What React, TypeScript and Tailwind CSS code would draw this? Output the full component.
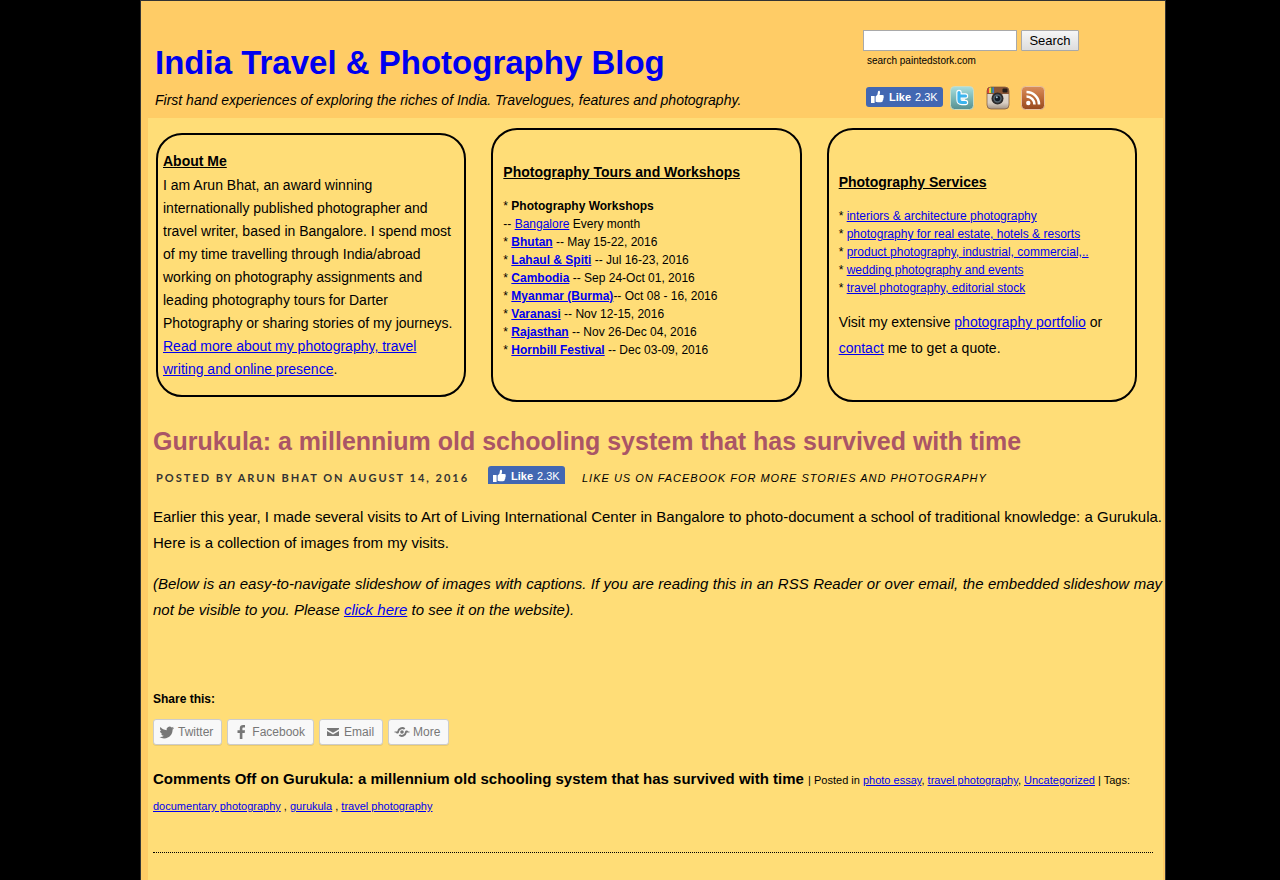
import type { ReactNode } from "react";

type LinkProps = { children: ReactNode; bold?: boolean };

function A({ children, bold }: LinkProps) {
  return (
    <a href="#" className={bold ? "font-bold text-[#0000ee] underline" : "text-[#0000ee] underline"}>
      {children}
    </a>
  );
}

function LikeButton() {
  return (
    <button
      type="button"
      className="flex h-5 w-[77px] shrink-0 items-center gap-[5px] rounded-[3px] bg-[#4267b2] pl-[5px] text-[11px] leading-5 text-white"
    >
      <svg width="13" height="14" viewBox="0 0 13 14" fill="currentColor" aria-hidden="true">
        <rect x="0" y="6" width="3.6" height="7" />
        <path d="M4.600 6.600 6.400 4.700 7 1.600C7.100.8 8.400.6 8.800 1.300 9.300 2.300 9 3.700 8.500 5H11.500C12.800 5 13 6 12.600 6.700 12.900 7.400 12.700 8 12.300 8.500 12.500 9.300 12.200 9.900 11.800 10.300 11.900 11.400 11.200 12.300 10 12.300H6.800C5.900 12.300 5.300 12 4.600 11.800Z" />
      </svg>
      <span>
        <b>Like</b> <span className="ml-px">2.3K</span>
      </span>
    </button>
  );
}

function TwitterBadge() {
  return (
    <svg width="24" height="24" viewBox="0 0 24 24" aria-hidden="true">
      <defs>
        <linearGradient id="tw" x1="0" y1="0" x2="0" y2="1">
          <stop offset="0" stopColor="#aadfdf" />
          <stop offset="0.5" stopColor="#7cb8b8" />
          <stop offset="1" stopColor="#568f90" />
        </linearGradient>
      </defs>
      <rect x="0.500" y="0.500" width="23" height="23" rx="4" fill="url(#tw)" stroke="#cfdcc0" />
      <path d="M9 6.500V13.500Q9 16.500 12 16.500H15.500M9 10H15.500" fill="none" stroke="#fff" strokeWidth="5.400" strokeLinecap="round" strokeLinejoin="round" />
      <path d="M9 6.500V13.500Q9 16.500 12 16.500H15.500M9 10H15.500" fill="none" stroke="#3bb4ee" strokeWidth="3.200" strokeLinecap="round" strokeLinejoin="round" />
      <path d="M11.800 13.200H15" stroke="#fff" strokeWidth="1.200" />
    </svg>
  );
}

function InstagramBadge() {
  return (
    <svg width="24" height="24" viewBox="0 0 24 24" aria-hidden="true">
      <defs>
        <clipPath id="ig">
          <rect x="1" y="1" width="22" height="22" rx="4" />
        </clipPath>
        <linearGradient id="ig-body" x1="0" y1="0" x2="0" y2="1">
          <stop offset="0" stopColor="#e6ddd2" />
          <stop offset="0.7" stopColor="#d9cfc4" />
          <stop offset="1" stopColor="#9a8a7c" />
        </linearGradient>
      </defs>
      <g clipPath="url(#ig)">
        <rect width="24" height="24" fill="url(#ig-body)" />
        <rect width="24" height="8" fill="#8a5636" />
        <rect x="1" width="2" height="7" fill="#e8413a" />
        <rect x="3" width="2" height="7" fill="#f4cc36" />
        <rect x="5" width="1.500" height="7" fill="#3f9f54" />
        <rect x="6.500" width="1.500" height="7" fill="#3c78d0" />
        <rect x="16.500" y="2.500" width="5" height="4" rx="1" fill="#241c19" />
      </g>
      <rect x="1" y="1" width="22" height="22" rx="4" fill="none" stroke="#7a5238" strokeOpacity="0.700" />
      <circle cx="11.500" cy="12.500" r="6" fill="#2c2a2b" />
      <circle cx="11.500" cy="12.500" r="4.200" fill="#56646e" />
      <circle cx="11.500" cy="12.500" r="2.800" fill="#141d27" />
      <circle cx="10.800" cy="11.300" r="1" fill="#a9c4d2" />
    </svg>
  );
}

function RssBadge() {
  return (
    <svg width="24" height="24" viewBox="0 0 24 24" aria-hidden="true">
      <defs>
        <linearGradient id="rss" x1="0" y1="0" x2="0" y2="1">
          <stop offset="0" stopColor="#d98d5c" />
          <stop offset="0.5" stopColor="#bd6a38" />
          <stop offset="1" stopColor="#95481f" />
        </linearGradient>
      </defs>
      <rect x="0.500" y="0.500" width="23" height="23" rx="4" fill="url(#rss)" stroke="#e8c2a0" />
      <circle cx="7.300" cy="17" r="2.200" fill="#fff" />
      <path d="M5.500 10.500A8 8 0 0 1 13.500 18.500M5.500 6A12.500 12.500 0 0 1 18 18.500" fill="none" stroke="#fff" strokeWidth="2.600" />
    </svg>
  );
}

const shareIcons: Record<string, ReactNode> = {
  Twitter: (
    <path d="M15 3.900c-.5.200-1.100.4-1.700.5.600-.4 1.100-.9 1.300-1.600-.6.300-1.200.6-1.900.7A3 3 0 0 0 7.600 6.200C5.100 6.100 2.900 4.900 1.400 3.100c-.8 1.400-.3 3.100.9 4-.5 0-.9-.2-1.300-.4 0 1.400 1 2.700 2.400 3-.4.1-.9.1-1.300 0 .4 1.200 1.500 2.100 2.800 2.100A6 6 0 0 1 .5 13c1.300.9 2.900 1.400 4.600 1.400 5.600 0 8.700-4.700 8.500-8.900.6-.4 1.100-1 1.400-1.600z" />
  ),
  Facebook: <path d="M6.800 15V9H4.500V6.300h2.300V4.300C6.800 2.100 8.100 1 10.100 1c.9 0 1.500.1 1.900.1v2.300h-1.300c-1.100 0-1.300.5-1.300 1.300v1.600h2.600L11.700 9H9.400v6z" />,
  Email: <path d="M2 4h12v1.200L8 8.700 2 5.200zm0 2.900 6 3.500 6-3.500V12H2z" />,
  More: (
    <path d="M8 6.200a1.800 1.800 0 1 0 0 3.600 1.800 1.800 0 0 0 0-3.600M0.500 7.500h2.700A5 5 0 0 1 11.300 4.200L10 5.700A3.200 3.200 0 0 0 5 8c0 .8-.6 1.500-1.500 1.500H2.700L1.800 8.600H.5zM15.500 8.500h-2.700A5 5 0 0 1 4.700 11.800L6 10.300A3.200 3.200 0 0 0 11 8c0-.8.600-1.500 1.500-1.500h.8l.9.9h1.300z" />
  ),
};

const shareLabels = ["Twitter", "Facebook", "Email", "More"];

const tours = [
  ["Bhutan", " -- May 15-22, 2016"],
  ["Lahaul & Spiti", " -- Jul 16-23, 2016"],
  ["Cambodia", " -- Sep 24-Oct 01, 2016"],
  ["Myanmar (Burma)", "-- Oct 08 - 16, 2016"],
  ["Varanasi", " -- Nov 12-15, 2016"],
  ["Rajasthan", " -- Nov 26-Dec 04, 2016"],
  ["Hornbill Festival", " -- Dec 03-09, 2016"],
];

const services = [
  "interiors & architecture photography",
  "photography for real estate, hotels & resorts",
  "product photography, industrial, commercial,..",
  "wedding photography and events",
  "travel photography, editorial stock",
];

export default function App() {
  return (
    <div className="min-h-screen bg-black pl-[26px] font-['Liberation_Sans',Arial,sans-serif] text-black">
      <div className="mx-auto min-h-screen max-w-[1026px] border border-b-0 border-[#333333] bg-[#ffcc66]">
        <header className="flex items-start justify-between pb-2 pl-[14px]">
          <div className="pt-[42px]">
            <h1 className="text-[33px] leading-10 font-bold">
              <a href="#" className="text-[#0000ee]">India Travel &amp; Photography Blog</a>
            </h1>
            <p className="mt-[7px] text-[14px] leading-5 italic">
              First hand experiences of exploring the riches of India. Travelogues, features and photography.
            </p>
          </div>
          <div className="w-[302px] shrink-0 pt-[29px]">
            <form className="flex gap-1" onSubmit={(e) => e.preventDefault()}>
              <input
                id="site-search"
                type="text"
                className="h-[21px] w-[154px] border border-[#a9a9a9] bg-white px-1 text-[13px]"
              />
              <button
                type="submit"
                className="h-[21px] w-[58px] rounded-[1px] border border-[#a9a9a9] bg-linear-to-b from-[#f6f6f6] to-[#dddddd] text-[13px] leading-[19px]"
              >
                Search
              </button>
            </form>
            <label htmlFor="site-search" className="ml-1 block text-[10px] leading-5">
              search paintedstork.com
            </label>
            <div className="mt-[15px] ml-[3px] flex items-start">
              <div className="pt-px">
                <LikeButton />
              </div>
              <a href="#" aria-label="Twitter" className="ml-[7px]"><TwitterBadge /></a>
              <a href="#" aria-label="Instagram" className="ml-3"><InstagramBadge /></a>
              <a href="#" aria-label="RSS" className="ml-[11px]"><RssBadge /></a>
            </div>
          </div>
        </header>

        <main className="mr-[2px] ml-[7px] min-h-[762px] bg-[#ffdd77] pt-[10px]">
          <div className="mr-[26px] ml-2 grid grid-cols-3 items-center gap-[25px] text-[14px]">
            <section className="rounded-[26px] border-2 border-black px-[5px] py-[14px] leading-[23px]">
              <h2 className="leading-[25px] font-bold underline">About Me</h2>
              <p>
                I am Arun Bhat, an award winning internationally published photographer and travel writer, based in
                Bangalore. I spend most of my time travelling through India/abroad working on photography assignments
                and leading photography tours for Darter Photography or sharing stories of my journeys.{" "}
                <A>Read more about my photography, travel writing and online presence</A>.
              </p>
            </section>

            <section className="rounded-[26px] border-2 border-black px-[10px] pt-[29px] pb-[41px]">
              <h2 className="leading-[26px] font-bold underline">Photography Tours and Workshops</h2>
              <ul className="mt-3 text-[12px] leading-[18px]">
                <li>* <b>Photography Workshops</b></li>
                <li>-- <A>Bangalore</A> Every month</li>
                {tours.map(([name, dates]) => (
                  <li key={name}>* <A bold>{name}</A>{dates}</li>
                ))}
              </ul>
            </section>

            <section className="rounded-[26px] border-2 border-black px-[10px] py-[39px]">
              <h2 className="leading-[26px] font-bold underline">Photography Services</h2>
              <ul className="mt-3 text-[12px] leading-[18px]">
                {services.map((s) => (
                  <li key={s}>* <A>{s}</A></li>
                ))}
              </ul>
              <p className="mt-3 leading-[26px]">
                Visit my extensive <A>photography portfolio</A> or <A>contact</A> me to get a quote.
              </p>
            </section>
          </div>

          <article className="mr-[10px] ml-[5px] pt-[23px]">
            <h2 className="text-[25px] leading-8 font-bold text-[#aa5566]">
              Gurukula: a millennium old schooling system that has survived with time
            </h2>
            <div className="mt-[9px] flex h-[18px] items-start pl-[3px] text-[11px]">
              <span className="w-[332px] pt-[3px] font-['Lato',sans-serif] leading-[18px] font-bold tracking-[2px] text-[#333333]">
                POSTED BY ARUN BHAT ON AUGUST 14, 2016
              </span>
              <div className="h-[18px] overflow-hidden">
                <LikeButton />
              </div>
              <em className="ml-[17px] pt-[3px] leading-[18px] tracking-[1px]">
                LIKE US ON FACEBOOK FOR MORE STORIES AND PHOTOGRAPHY
              </em>
            </div>
            <div className="mt-5 -mr-[9px] text-justify text-[15px] leading-[26px]">
              <p>
                Earlier this year, I made several visits to Art of Living International Center in Bangalore to
                photo-document a school of traditional knowledge: a Gurukula. Here is a collection of images from my
                visits.
              </p>
              <p className="mt-[15px] italic">
                (Below is an easy-to-navigate slideshow of images with captions. If you are reading this in an RSS
                Reader or over email, the embedded slideshow may not be visible to you. Please <A>click here</A> to see
                it on the website).
              </p>
            </div>
            <h3 className="mt-[67px] text-[12px] leading-[18px] font-bold">Share this:</h3>
            <div className="mt-[11px] flex gap-[5px]">
              {shareLabels.map((label) => (
                <a
                  key={label}
                  href="#"
                  className="flex h-[26px] items-center gap-[3px] rounded-[3px] border border-[#cccccc] bg-[#f8f8f8] pr-2 pl-[5px] text-[12px] leading-6 text-[#777777] shadow-[0_1px_0_rgba(0,0,0,0.08)]"
                >
                  <svg width="16" height="16" viewBox="0 0 16 16" fill="currentColor" aria-hidden="true">
                    {shareIcons[label]}
                  </svg>
                  {label}
                </a>
              ))}
            </div>
            <footer className="mt-[21px] border-b border-dotted border-black pb-[33px] text-[11px] leading-[26px]">
              <b className="text-[15px]">
                Comments Off on Gurukula: a millennium old schooling system that has survived with time{" "}
              </b>
              | Posted in <A>photo essay</A>, <A>travel photography</A>, <A>Uncategorized</A> | Tags:{" "}
              <A>documentary photography</A> , <A>gurukula</A> , <A>travel photography</A>
            </footer>
          </article>
        </main>
      </div>
    </div>
  );
}
